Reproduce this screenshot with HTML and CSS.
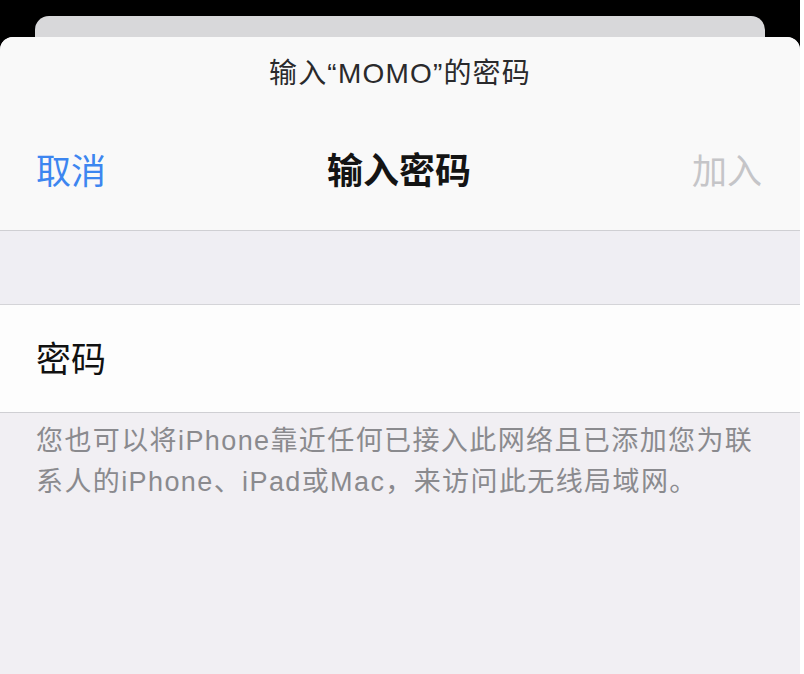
FILE: index.html
```html
<!DOCTYPE html>
<html lang="zh-CN">
<head>
    <meta charset="UTF-8">
    <meta name="viewport" content="width=device-width, initial-scale=1.0">
    <title>输入密码</title>
    <link rel="stylesheet" href="styles.css">
</head>
<body>
    <div class="screen">
        <div class="back-card"></div>

        <div class="sheet">
            <div class="sheet-header">
                <div class="prompt">输入“MOMO”的密码</div>
                <div class="nav-bar">
                    <span class="nav-btn cancel">取消</span>
                    <span class="nav-title">输入密码</span>
                    <span class="nav-btn join">加入</span>
                </div>
            </div>

            <div class="spacer"></div>

            <div class="field-row">
                <span class="field-label">密码</span>
            </div>

            <p class="footer-note">您也可以将iPhone靠近任何已接入此网络且已添加您为联<br>系人的iPhone、iPad或Mac，来访问此无线局域网。</p>
        </div>
    </div>
</body>
</html>
```

FILE: styles.css
```css
html, body {
    margin: 0;
    background: #fff;
}
body {
    font-family: "Liberation Sans", "Noto Sans CJK SC", sans-serif;
    color: #1c1c1e;
}

.screen {
    width: 800px;
    height: 674px;
    background: #000;
    padding-top: 16px;
    box-sizing: border-box;
    display: flex;
    flex-direction: column;
    overflow: hidden;
}

.back-card {
    height: 21px;
    margin: 0 35px;
    width: 730px;
    background: #d8d8da;
    border-radius: 14px 14px 0 0;
    flex-shrink: 0;
}

.sheet {
    flex: 1;
    background: #f1eff3;
    border-radius: 13px 13px 0 0;
    overflow: hidden;
}

.sheet-header {
    background: #f9f9f9;
    padding-top: 19px;
    height: 174px;
    border-bottom: 1px solid #cfcfd3;
}
.prompt {
    text-align: center;
    font-size: 28px;
    letter-spacing: 1.2px;
    line-height: 36px;
    color: #2a2a2c;
}

.nav-bar {
    display: flex;
    justify-content: space-between;
    align-items: center;
    padding: 0 38px 0 36px;
    margin-top: 51px;
    height: 50px;
}
.nav-btn {
    font-size: 35px;
}
.cancel {
    color: #3d86f0;
}
.join {
    color: #c5c5c8;
}
.nav-title {
    font-size: 36px;
    font-weight: 700;
    color: #141414;
}

.spacer {
    height: 73px;
    background: #efeef3;
    border-bottom: 1px solid #d4d4d8;
}

.field-row {
    height: 103px;
    padding-bottom: 4px;
    background: #fdfdfd;
    border-bottom: 1px solid #cfcfd3;
    display: flex;
    align-items: center;
    padding-left: 36px;
}
.field-label {
    font-size: 35px;
    color: #111;
}

.footer-note {
    margin: 0;
    padding: 8px 0 0 36px;
    font-size: 27px;
    letter-spacing: 1.4px;
    line-height: 41px;
    color: #8a8a8e;
}
```
